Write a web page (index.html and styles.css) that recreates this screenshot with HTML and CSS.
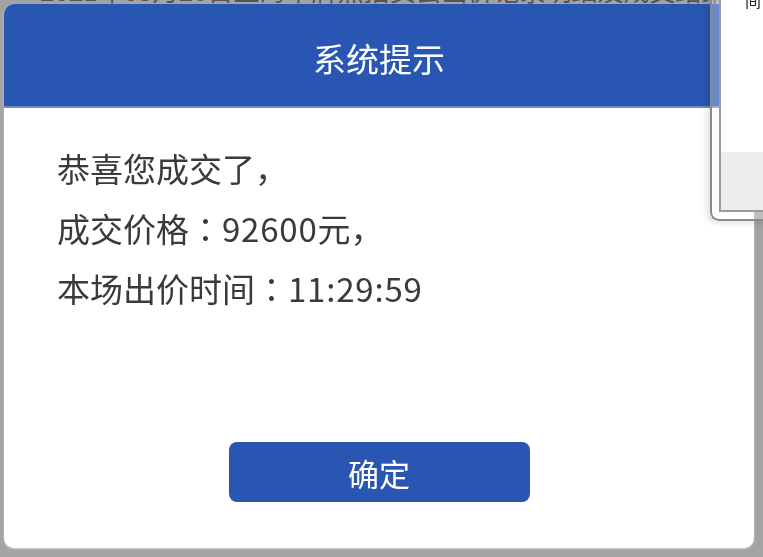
FILE: index.html
```
<!DOCTYPE html>
<html lang="zh-CN">
<head>
    <meta charset="UTF-8">
    <meta name="viewport" content="width=device-width, initial-scale=1.0">
    <title>系统提示</title>
    <link rel="stylesheet" href="styles.css">
</head>
<body>
    <!-- Page content behind the mask -->
    <div class="page">
        <p class="page-line">2021年03月26日上海市牌照拍卖会出价记录明细及成交结果公告</p>
    </div>

    <!-- Side popup (partly hidden) -->
    <div class="side-popup">
        <div class="side-inner">
            <div class="side-text">间</div>
            <div class="side-foot"></div>
        </div>
    </div>

    <!-- Result dialog -->
    <div class="dialog">
        <div class="dialog-head">系统提示</div>
        <div class="dialog-body">
            <p>恭喜您成交了，</p>
            <p>成交价格<span class="colon" lang="ja">：</span><span class="num">92600</span>元，</p>
            <p>本场出价时间<span class="colon" lang="ja">：</span><span class="num">11:29:59</span></p>
        </div>
        <div class="dialog-foot">
            <button class="btn-ok">确定</button>
        </div>
    </div>
</body>
</html>
```

FILE: styles.css
```
/* Body styles */
body {
    margin: 0;
    padding: 0;
    background: #a3a3a3; /* Mask grey */
    font-family: "Noto Sans CJK SC", "Noto Sans", sans-serif;
    overflow: hidden;
    height: 557px;
}

/* Page text behind the mask */
.page {
    padding-left: 40px;
}

.page-line {
    margin: -24px 0 0 0;
    font-size: 26px;
    line-height: 28px;
    color: #555;
    white-space: nowrap;
}

/* Dialog */
.dialog {
    position: fixed;
    left: 4px;
    top: 4px;
    width: 750px;
    height: 544px;
    background: #fff;
    border-radius: 10px;
    overflow: hidden;
    display: flex;
    flex-direction: column;
    box-shadow: 0 1px 2px rgba(255, 255, 255, 0.5);
}

.dialog-head {
    height: 102px;
    line-height: 108px;
    background: #2956b2;
    border-bottom: 2px solid #6a8ccc;
    color: #fff;
    font-size: 33px;
    text-align: center;
}

.dialog-body {
    flex: 1;
    padding: 30px 53px 0;
}

.dialog-body p {
    margin: 0;
    font-size: 33px;
    line-height: 60px;
    color: #3a3a3a;
}

/* Centred full-width colon */
.colon {
    font-family: "Noto Sans CJK JP", "Noto Sans CJK SC", sans-serif;
}

.num {
    letter-spacing: 0.8px;
}

.dialog-foot {
    display: flex;
    justify-content: center;
    padding-bottom: 46px;
}

/* Button */
.btn-ok {
    width: 301px;
    height: 60px;
    border: none;
    border-radius: 8px;
    background: #2956b2;
    color: #fff;
    font-family: inherit;
    font-size: 31px;
    cursor: pointer;
}

/* Side popup frame */
.side-popup {
    position: absolute;
    left: 710px;
    top: -10px;
    width: 80px;
    height: 231px;
    padding: 0 0 7px 7px;
    background: rgba(255, 255, 255, 0.3);
    border-left: 2px solid #8a8a8a;
    border-bottom: 2px solid #8a8a8a;
    border-bottom-left-radius: 9px;
    box-shadow: -3px 2px 6px rgba(0, 0, 0, 0.12);
    z-index: 2;
    box-sizing: border-box;
    display: flex;
}

.side-inner {
    flex: 1;
    background: #fff;
    border-left: 2px solid #9a9a9a;
    border-bottom: 2px solid #9a9a9a;
    display: flex;
    flex-direction: column;
}

.side-text {
    flex: 1;
    font-size: 16px;
    line-height: 16px;
    padding: 2px 0 0 24px;
    color: #222;
}

.side-foot {
    height: 58px;
    background: #eeeeee;
}
```
